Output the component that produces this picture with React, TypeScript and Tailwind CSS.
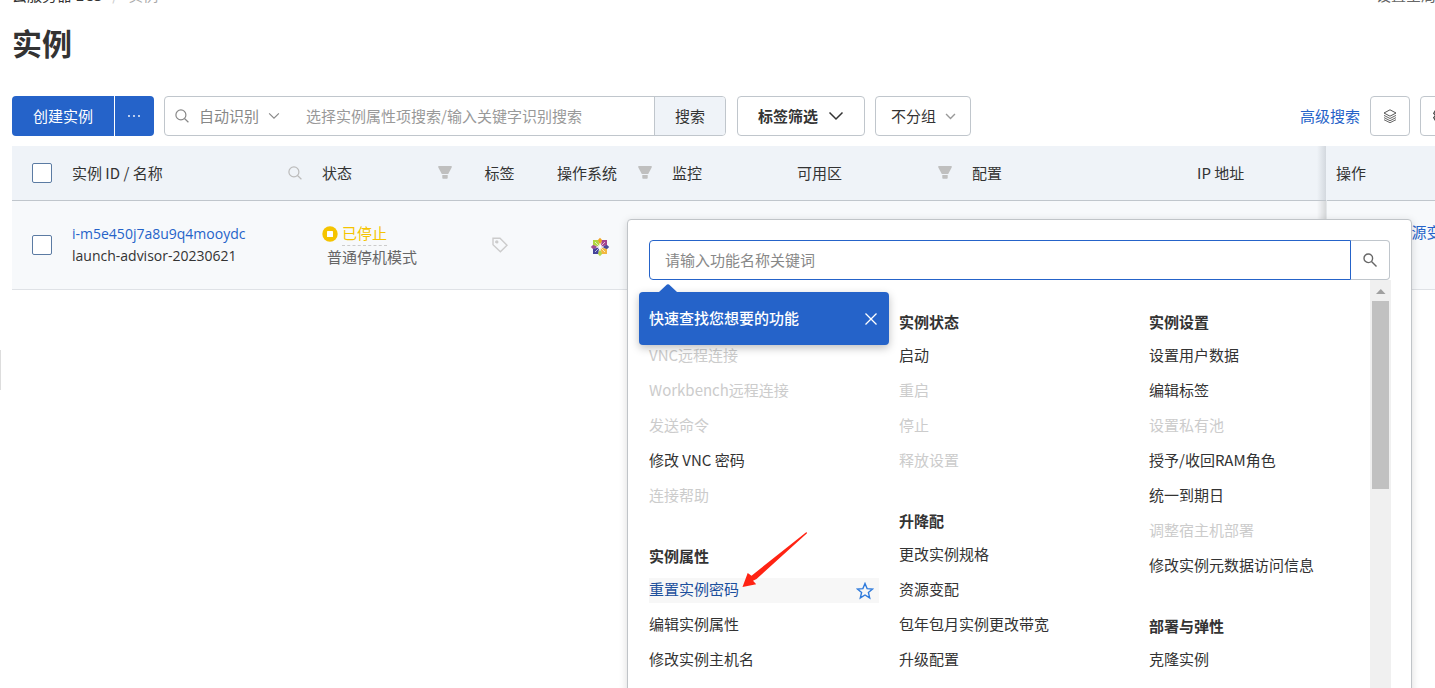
import React from "react";

type Item = { label: string; disabled?: boolean; active?: boolean };
type Group = { title?: string; items: Item[] };

const columns: Group[][] = [
  [
    {
      items: [
        { label: "VNC远程连接", disabled: true },
        { label: "Workbench远程连接", disabled: true },
        { label: "发送命令", disabled: true },
        { label: "修改 VNC 密码" },
        { label: "连接帮助", disabled: true },
      ],
    },
    {
      title: "实例属性",
      items: [
        { label: "重置实例密码", active: true },
        { label: "编辑实例属性" },
        { label: "修改实例主机名" },
      ],
    },
  ],
  [
    {
      title: "实例状态",
      items: [
        { label: "启动" },
        { label: "重启", disabled: true },
        { label: "停止", disabled: true },
        { label: "释放设置", disabled: true },
      ],
    },
    {
      title: "升降配",
      items: [
        { label: "更改实例规格" },
        { label: "资源变配" },
        { label: "包年包月实例更改带宽" },
        { label: "升级配置" },
      ],
    },
  ],
  [
    {
      title: "实例设置",
      items: [
        { label: "设置用户数据" },
        { label: "编辑标签" },
        { label: "设置私有池", disabled: true },
        { label: "授予/收回RAM角色" },
        { label: "统一到期日" },
        { label: "调整宿主机部署", disabled: true },
        { label: "修改实例元数据访问信息" },
      ],
    },
    { title: "部署与弹性", items: [{ label: "克隆实例" }] },
  ],
];

function SearchIcon({ className = "" }: { className?: string }) {
  return (
    <svg viewBox="0 0 14 14" className={"size-3.5 shrink-0 " + className} fill="none" stroke="currentColor" strokeWidth="1.2" aria-hidden="true">
      <circle cx="5.9" cy="5.9" r="5" />
      <path d="M9.5 9.5 13.4 13.2" />
    </svg>
  );
}

function Chevron({ className = "" }: { className?: string }) {
  return (
    <svg viewBox="0 0 16 10" className={className} fill="none" stroke="currentColor" aria-hidden="true">
      <path d="m1.5 1.5 6.5 6.5 6.5-6.5" />
    </svg>
  );
}

function FilterIcon() {
  return (
    <svg viewBox="0 0 14 13" className="h-[13px] w-3.5 shrink-0 text-[#bfbfbf]" fill="currentColor" aria-hidden="true">
      <path d="M.3 0h13.4v1.6L10.2 8H3.8L.3 1.6zM4.3 9h5.4v3.2l-.7.6H5l-.7-.6z" />
    </svg>
  );
}

function LayersIcon() {
  return (
    <svg viewBox="0 0 14 14" className="size-3.5" fill="none" stroke="#555" aria-hidden="true">
      <path d="M7 .8 13 4 7 7.2 1 4z" />
      <path d="M1 6.4 7 9.5l6-3.1M1 8.6l6 3.1 6-3.1M1 10.7l6 3 6-3" strokeWidth=".9" />
    </svg>
  );
}

function GearIcon() {
  return (
    <svg viewBox="0 0 16 16" className="size-4" fill="none" stroke="#444" strokeWidth="1.2" aria-hidden="true">
      <path d="M6.6 1h2.8l.4 1.900 1.300.700 1.800-.600 1.400 2.400-1.400 1.400v1.500l1.400 1.300-1.400 2.400-1.800-.600-1.300.700-.400 1.900H6.600l-.400-1.900-1.300-.700-1.800.600-1.400-2.400 1.400-1.300V6.800L1.700 5.400 3.100 3l1.800.6 1.300-.7z" />
      <circle cx="8" cy="7.500" r="2.200" />
    </svg>
  );
}

function TagIcon() {
  return (
    <svg viewBox="0 0 16 16" className="size-4" fill="none" stroke="#ccc" strokeWidth="1.4" aria-hidden="true">
      <path d="M1 1.200h7L15 8.300 8.400 14.800 1 7.800z" />
      <circle cx="4.800" cy="4.900" r="1" fill="#ccc" />
    </svg>
  );
}

function StoppedIcon() {
  return (
    <svg viewBox="0 0 16 16" className="size-4 shrink-0" aria-hidden="true">
      <circle cx="8" cy="8" r="7.700" fill="#f5c400" />
      <rect x="5" y="5" width="6" height="6" rx=".6" fill="#fff" />
    </svg>
  );
}

function CentosIcon() {
  return (
    <svg viewBox="0 0 20 20" className="size-5" role="img" aria-label="CentOS">
      <path d="m10 .8 2.500 2.700L10 8 7.500 3.500z" fill="#efa724" />
      <path d="m19.200 10-2.700 2.500L12 10l4.500-2.500z" fill="#4a4a98" />
      <path d="m10 19.200-2.500-2.700L10 12l2.500 4.500z" fill="#b4d84a" />
      <path d="m.8 10 2.700-2.500L8 10l-4.500 2.500z" fill="#a14f91" />
      <path d="M3 3h5l1.500 5L9 9.500 3 8z" fill="#b0d640" />
      <path d="M17 3v5l-5.500 1.500L11 8l1-5z" fill="#a5458f" />
      <path d="M3 17v-5l5.500-1.500L9 12l-1 5z" fill="#45449a" />
      <path d="M17 17h-5l-1.500-5 .5-1.500 6 1.500z" fill="#f2b840" />
      <path d="m5 5 10 10M15 5 5 15" stroke="#fff" strokeOpacity=".75" strokeWidth=".9" />
      <path d="M10 6v8M6 10h8" stroke="#fff" strokeOpacity=".8" strokeWidth=".9" />
    </svg>
  );
}

function StarIcon() {
  return (
    <svg viewBox="0 0 18 18" className="size-[18px]" fill="none" stroke="#2f7bdc" strokeWidth="1.4" aria-hidden="true">
      <path d="m9 1.500 2.100 5.100 5.500.4-4.200 3.500 1.300 5.400L9 13l-4.700 2.900 1.300-5.400L1.400 7l5.500-.4z" />
    </svg>
  );
}

function MenuItem({ item }: { item: Item }) {
  const tone = item.disabled ? "text-[#ccc]" : item.active ? "text-[#1c4f9c]" : "text-[#333]";
  return (
    <li className={"flex h-[25px] w-[230px] items-start justify-between pr-[5px] " + (item.active ? "bg-[#f7f7f7]" : "")}>
      <button type="button" disabled={item.disabled} className={"whitespace-nowrap " + tone}>
        {item.label}
      </button>
      {item.active && (
        <button type="button" aria-label="收藏" className="self-center">
          <StarIcon />
        </button>
      )}
    </li>
  );
}

function FeatureMenu() {
  return (
    <div className="absolute top-[219px] right-[23px] -bottom-2 flex w-[785px] flex-col rounded-t-sm border border-[#c0c4c8] bg-white px-5 pt-5 pl-[21px] shadow-[0_2px_8px_rgba(0,0,0,0.15)]">
      <div className="flex h-10 shrink-0 pr-px">
        <input
          type="text"
          aria-label="功能名称"
          placeholder="请输入功能名称关键词"
          className="min-w-0 flex-1 rounded-l-sm border border-[#2563c9] px-[15px] outline-none placeholder:text-[#888]"
        />
        <button type="button" aria-label="查找" className="flex w-[39px] items-center justify-center rounded-r-sm border border-l-0 border-[#c0c6cc] text-[#666]">
          <svg viewBox="0 0 14 14" className="size-3.5" fill="none" stroke="currentColor" strokeWidth="1.4" aria-hidden="true">
            <circle cx="5.300" cy="5.300" r="4.300" />
            <path d="m8.500 8.500 5 5" />
          </svg>
        </button>
      </div>
      <div className="flex min-h-0 flex-1">
        <div className="grid min-w-0 flex-1 grid-cols-[250px_250px_1fr] pt-[30px]">
          {columns.map((groups, c) => (
            <div key={c} className="flex flex-col gap-[35px]">
              {groups.map((group, g) => (
                <section key={g} className={group.title ? "" : "pt-[34px]"}>
                  {group.title && <h3 className="mb-2.5 h-6 leading-6 font-bold text-[#333]">{group.title}</h3>}
                  <ul className="flex flex-col gap-2.5">
                    {group.items.map((item) => (
                      <MenuItem key={item.label} item={item} />
                    ))}
                  </ul>
                </section>
              ))}
            </div>
          ))}
        </div>
        <div className="flex w-[21px] shrink-0 flex-col items-center bg-[#f0f0f0]">
          <svg viewBox="0 0 21 21" className="size-[21px]" aria-hidden="true">
            <path d="M6 14h9.500l-4.700-5z" fill="#a0a0a0" />
          </svg>
          <div className="h-[188px] w-[17px] bg-[#c1c1c1]" />
        </div>
      </div>

      <div className="absolute top-[72px] left-[11px] flex h-[53px] w-[250px] items-center justify-between rounded-sm bg-[#2563c9] pr-3 pl-2.5 text-white shadow-[0_3px_8px_rgba(0,0,0,0.25)]">
        <svg viewBox="0 0 18 8" className="absolute -top-2 left-5 h-2 w-[18px]" aria-hidden="true">
          <path d="M0 8 8 .6q1-.8 2 0L18 8z" fill="#2563c9" />
        </svg>
        <span className="pb-0.5 font-medium">快速查找您想要的功能</span>
        <button type="button" aria-label="关闭">
          <svg viewBox="0 0 12 12" className="size-3" fill="none" stroke="currentColor" strokeWidth="1.3" aria-hidden="true">
            <path d="m.5.5 11 11m0-11-11 11" />
          </svg>
        </button>
      </div>

      <svg viewBox="0 0 66 57" className="pointer-events-none absolute top-[311px] left-[114px] h-[57px] w-[66px]" aria-hidden="true">
        <path d="M64.500 1 9.500 44.700 5.700 42 .5 56l13.700-2.800-3.200-3.500 3.500-1.600L65 2.200z" fill="#ff2313" />
      </svg>
    </div>
  );
}

const box = "rounded-sm border border-[#c0c6cc] bg-white";

export default function App() {
  return (
    <div className="relative min-h-screen overflow-hidden bg-white pl-3 font-['Noto_Sans_CJK_SC',sans-serif] text-[15px] leading-[22px] text-[#333]">
      <header>
        <div className="-mt-4 -mr-[31px] flex justify-between">
          <nav aria-label="面包屑" className="flex gap-2.5">
            <a href="#ecs">云服务器 ECS</a>
            <span className="text-[#ccc]">/</span>
            <span className="text-[#aaa]">实例</span>
          </nav>
          <a href="#settings" className="text-[#666]">设置全局标签</a>
        </div>
        <h1 className="mt-4 text-[30px] leading-10 font-bold">实例</h1>
      </header>

      <div className="mt-[34px] -mr-[25px] flex h-10 items-stretch">
        <button type="button" className="w-[102px] rounded-l-sm bg-[#2563c9] text-white">创建实例</button>
        <button type="button" aria-label="更多创建方式" className="ml-px flex w-[39px] items-center justify-center rounded-r-sm bg-[#2563c9] pr-0.5">
          <svg viewBox="0 0 14 4" className="h-1 w-3.5" fill="#fff" aria-hidden="true">
            <circle cx="2" cy="2" r=".9" />
            <circle cx="7" cy="2" r=".9" />
            <circle cx="12" cy="2" r=".9" />
          </svg>
        </button>
        <form className={"ml-2.5 flex w-[562px] overflow-hidden " + box}>
          <div className="flex items-center pl-2.5 text-[#888]">
            <SearchIcon />
            <select aria-label="搜索类型" className="ml-2.5 appearance-none bg-transparent outline-none">
              <option>自动识别</option>
            </select>
            <Chevron className="ml-2 h-2 w-3 stroke-[1.5]" />
          </div>
          <input aria-label="搜索实例" placeholder="选择实例属性项搜索/输入关键字识别搜索" className="ml-[26px] min-w-0 flex-1 outline-none placeholder:text-[#999]" />
          <button type="button" className="w-[71px] border-l border-[#c0c6cc] bg-[#eff3f8]">搜索</button>
        </form>
        <button type="button" className={"ml-[11px] flex w-32 items-center pl-5 font-bold " + box}>
          标签筛选
          <Chevron className="ml-2.5 h-[10px] w-4 stroke-[1.5]" />
        </button>
        <label className={"ml-2.5 flex w-24 items-center pl-[15px] " + box}>
          <select aria-label="分组" className="appearance-none bg-transparent outline-none">
            <option>不分组</option>
          </select>
          <Chevron className="ml-2 h-[7px] w-[11px] stroke-2 text-[#999]" />
        </label>
        <a href="#advanced" className="ml-auto self-center text-[#2563c9]">高级搜索</a>
        <button type="button" aria-label="视图" className={"ml-2.5 flex w-10 items-center justify-center " + box}>
          <LayersIcon />
        </button>
        <button type="button" aria-label="设置" className={"ml-2.5 flex w-10 items-center justify-center " + box}>
          <GearIcon />
        </button>
      </div>

      <table className="mt-2.5 w-full table-fixed border-collapse text-left">
        <colgroup>
          <col className="w-[50px]" />
          <col className="w-[250px]" />
          <col className="w-[150px]" />
          <col className="w-[75px]" />
          <col className="w-[125px]" />
          <col className="w-[125px]" />
          <col className="w-[175px]" />
          <col className="w-[225px]" />
          <col className="w-[139px]" />
          <col />
        </colgroup>
        <thead>
          <tr className="h-[54px] border-b border-[#c0c6cc] bg-[#eff3f8] *:p-0 *:px-2.5 *:font-normal">
            <th>
              <input type="checkbox" aria-label="全选" className="ml-2.5 block size-5 appearance-none rounded-xs border border-[#5b7ba3] bg-white" />
            </th>
            <th>
              <div className="flex items-center justify-between">
                实例 ID / 名称
                <SearchIcon className="text-[#bbb]" />
              </div>
            </th>
            <th>
              <div className="flex items-center justify-between">
                状态
                <FilterIcon />
              </div>
            </th>
            <th className="text-center">标签</th>
            <th>
              <div className="flex items-center justify-between pl-2.5">
                操作系统
                <FilterIcon />
              </div>
            </th>
            <th>监控</th>
            <th>
              <div className="flex items-center justify-between">
                可用区
                <FilterIcon />
              </div>
            </th>
            <th>配置</th>
            <th className="bg-linear-to-l from-[#d3d8de] to-transparent to-[9px]">IP 地址</th>
            <th>操作</th>
          </tr>
        </thead>
        <tbody>
          <tr className="h-[89px] border-b border-[#dfe2e6] bg-[#f7f9fb] *:p-0 *:px-2.5">
            <td>
              <input type="checkbox" aria-label="选择实例" className="ml-2.5 block size-5 appearance-none rounded-xs border border-[#5b7ba3] bg-white" />
            </td>
            <td className="font-['Open_Sans',sans-serif] text-sm leading-[22px]">
              <a href="#instance" className="block text-[#2563c9]">i-m5e450j7a8u9q4mooydc</a>
              launch-advisor-20230621
            </td>
            <td>
              <div className="flex items-center gap-1 text-[#f5c400]">
                <StoppedIcon />
                <span className="border-b border-dashed border-[#ccc] leading-6">已停止</span>
              </div>
              <div className="pl-[5px] text-[#666]">普通停机模式</div>
            </td>
            <td>
              <div className="flex justify-center">
                <TagIcon />
              </div>
            </td>
            <td>
              <div className="flex justify-center pt-1">
                <CentosIcon />
              </div>
            </td>
            <td />
            <td />
            <td />
            <td className="bg-linear-to-l from-[#d6d8da] to-transparent to-[9px]" />
            <td className="border-l border-[#e4e7ea]">
              <a href="#resize" className="-mt-6 ml-[60px] block whitespace-nowrap text-[#2563c9]">资源变配</a>
            </td>
          </tr>
        </tbody>
      </table>

      <div className="absolute top-[350px] left-0 h-10 w-px bg-[#ddd]" />
      <FeatureMenu />
    </div>
  );
}
